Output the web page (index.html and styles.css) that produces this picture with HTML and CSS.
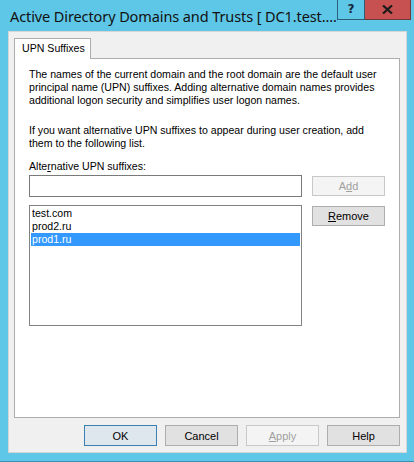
FILE: index.html
```html
<!DOCTYPE html>
<html lang="en">
<head>
  <meta charset="UTF-8">
  <title>UPN Suffixes</title>
  <link rel="stylesheet" href="styles.css">
</head>
<body>
  <div class="window">
    <!-- Title bar -->
    <div class="titlebar">
      <div class="title">Active Directory Domains and Trusts [ DC1.test....</div>
      <div class="caption-btns">
        <div class="cap-help">?</div>
        <div class="cap-close">
          <svg width="11" height="9" viewBox="0 0 11 9">
            <path d="M1 0.5 L10 8.5 M10 0.5 L1 8.5" stroke="#1b1b1b" stroke-width="2.2"/>
          </svg>
        </div>
      </div>
    </div>

    <!-- Client area -->
    <div class="client">
      <div class="tabs">
        <div class="tab">UPN Suffixes</div>
      </div>
      <div class="panel">
        <p class="info">The names of the current domain and the root domain are the default user principal name (UPN) suffixes. Adding alternative domain names provides additional logon security and simplifies user logon names.</p>
        <p class="info second">If you want alternative UPN suffixes to appear during user creation, add them to the following list.</p>
        <div class="label">Alte<u>r</u>native UPN suffixes:</div>

        <div class="row">
          <div class="textbox"></div>
          <button class="btn side disabled">A<u>d</u>d</button>
        </div>
        <div class="row list-row">
          <div class="listbox">
            <div class="item">test.com</div>
            <div class="item">prod2.ru</div>
            <div class="item selected">prod1.ru</div>
          </div>
          <button class="btn side"><u>R</u>emove</button>
        </div>
      </div>

      <div class="footer">
        <button class="btn default">OK</button>
        <button class="btn">Cancel</button>
        <button class="btn disabled"><u>A</u>pply</button>
        <button class="btn">Help</button>
      </div>
    </div>
  </div>
</body>
</html>
```

FILE: styles.css
```css
body {
  margin: 0;
  background: #5ec6e6;
  font-family: 'Liberation Sans', Arial, sans-serif;
  font-size: 10.6px;
  color: #000;
}
.window {
  width: 414px;
  height: 462px;
  box-sizing: border-box;
  background: #5ec6e6;
  border-bottom: 1px solid #3b8fb0;
  display: flex;
  flex-direction: column;
  overflow: hidden;
}
.titlebar {
  height: 31px;
  display: flex;
  justify-content: space-between;
  align-items: flex-start;
  padding-right: 7px;
}
.title {
  font-family: 'Noto Sans', 'Open Sans', sans-serif;
  font-size: 14.5px;
  color: #111;
  padding: 6px 0 0 10px;
  white-space: nowrap;
  letter-spacing: -0.1px;
}
.caption-btns {
  display: flex;
}
.cap-help {
  width: 28px;
  height: 20px;
  box-sizing: border-box;
  border: 1px solid #2d5f78;
  border-top: none;
  font-family: 'DejaVu Sans', sans-serif;
  font-weight: bold;
  font-size: 12px;
  line-height: 18px;
  text-align: center;
  color: #16263a;
}
.cap-close {
  width: 46px;
  height: 20px;
  box-sizing: border-box;
  background: #c75050;
  border: 1px solid #6b3a3a;
  border-top: none;
  border-left: none;
  display: flex;
  align-items: center;
  justify-content: center;
}
.client {
  flex: 1;
  margin: 0 7px 8px 8px;
  background: #f0f0f0;
  border: 1px solid #d6d6d6;
  padding: 6px 6px 0 5px;
  display: flex;
  flex-direction: column;
}
.tabs {
  display: flex;
  height: 20px;
}
.tab {
  width: 77px;
  box-sizing: border-box;
  background: #fff;
  border: 1px solid #adadad;
  border-bottom: none;
  padding: 3px 0 0 7px;
  position: relative;
  z-index: 1;
  height: 21px;
}
.panel {
  height: 360px;
  box-sizing: border-box;
  background: #fff;
  border: 1px solid #adadad;
  padding: 9px 0 0 14px;
}
.info {
  margin: 0;
  width: 352px;
  line-height: 13px;
}
.info.second {
  margin-top: 17px;
}
.label {
  margin-top: 10px;
  line-height: 13px;
}
.row {
  display: flex;
  align-items: flex-start;
  gap: 10px;
  margin-top: 2px;
}
.list-row {
  margin-top: 8px;
}
.textbox {
  width: 273px;
  height: 22px;
  box-sizing: border-box;
  background: #fff;
  border: 1px solid #7a7a7a;
}
.listbox {
  width: 273px;
  height: 121px;
  box-sizing: border-box;
  background: #fff;
  border: 1px solid #828282;
  padding: 1px 1px;
}
.item {
  height: 13px;
  line-height: 13px;
  padding-left: 1px;
}
.item.selected {
  background: #3399ff;
  color: #fff;
}
.btn {
  font-family: 'Liberation Sans', Arial, sans-serif;
  font-size: 11px;
  width: 73px;
  height: 21px;
  box-sizing: border-box;
  background: #e1e1e1;
  border: 1px solid #adadad;
  color: #000;
  padding: 0;
  margin: 0;
}
.btn.side {
  height: 20px;
  margin-top: 1px;
}
.btn.default {
  background: #dfe7ee;
  border-color: #3c7fb1;
}
.btn.disabled {
  background: #f4f4f4;
  border-color: #c8c8c8;
  color: #a0a0a0;
}
.footer {
  display: flex;
  justify-content: flex-end;
  gap: 8px;
  padding-top: 7px;
}
```
